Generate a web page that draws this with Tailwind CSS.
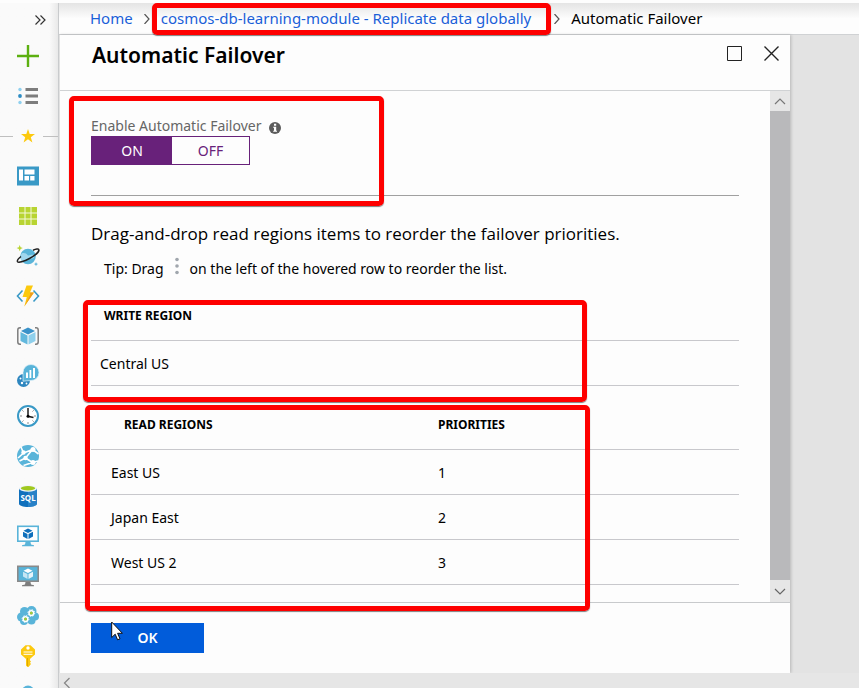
<!DOCTYPE html>
<html lang="en">
<head>
<meta charset="utf-8">
<title>Automatic Failover</title>
<script src="https://cdn.jsdelivr.net/npm/@tailwindcss/browser@4"></script>
</head>
<body class="relative flex h-screen overflow-hidden bg-[#fdfdfd] pt-[3px] font-['Noto_Sans','Open_Sans',sans-serif] text-sm text-black">

<!-- Service sidebar -->
<nav aria-label="Services" class="relative z-10 flex w-[59px] shrink-0 flex-col overflow-hidden border-r border-[#c9cbcd] bg-linear-to-r from-[#fafafa] from-85% to-[#e9e9e9]">
  <button type="button" aria-label="Expand menu" class="flex h-[33px] shrink-0 items-center justify-end pr-3">
    <svg class="h-3 w-3" viewBox="0 0 12 12" fill="none" stroke="#333" stroke-width="1.2"><path d="M1.5 1.5 6 6l-4.500 4.500M6.500 1.500 11 6l-4.500 4.500"/></svg>
  </button>
  <a href="#" aria-label="Create" class="flex h-10 w-14 shrink-0 items-center justify-center">
    <svg class="h-6 w-6" viewBox="0 0 24 24" stroke="#5cb010" stroke-width="2.400"><path d="M12 1v22M1 12h22"/></svg>
  </a>
  <a href="#" aria-label="All services" class="flex h-10 w-14 shrink-0 items-center justify-center">
    <svg class="h-6 w-6" viewBox="0 0 24 24"><path fill="#7d7d7d" d="M9.500 4H22v3H9.500zM9.500 10.500H22v3H9.500zM9.500 17H22v3H9.500z"/><circle cx="4" cy="5.500" r="1.700" fill="#8fd0ef"/><circle cx="4" cy="12" r="1.900" fill="#2d8cc4"/><circle cx="4" cy="18.500" r="1.700" fill="#8fd0ef"/></svg>
  </a>
  <div class="flex h-10 shrink-0 items-center gap-2">
    <span class="h-px w-[13px] bg-[#bfbfbf]"></span>
    <svg class="h-[14px] w-[14px]" viewBox="0 0 14 14" fill="#fcc90e"><path d="M7 0l1.700 5H14L9.800 8.200 11.400 13.500 7 10.300 2.600 13.500 4.200 8.200 0 5h5.300z"/></svg>
    <span class="h-px flex-1 bg-[#bfbfbf]"></span>
  </div>
  <a href="#" aria-label="Dashboard" class="flex h-10 w-14 shrink-0 items-center justify-center">
    <svg class="h-6 w-6" viewBox="0 0 24 24"><path fill="#3999c6" d="M1 2.500h22v19H1z"/><path fill="#fff" d="M3 5.500h4v11H3zM8.500 5.500h10v5h-10zM8.500 12h4.500v4.500H8.500zM14.200 12h4.300v4.500h-4.300z"/></svg>
  </a>
  <a href="#" aria-label="All resources" class="flex h-10 w-14 shrink-0 items-center justify-center">
    <svg class="h-6 w-6" viewBox="0 0 24 24"><path fill="#b8d432" d="M3 3h18v18H3z"/><path stroke="#f5f9dc" stroke-width="1" d="M9 3v18M15 3v18M3 9h18M3 15h18"/></svg>
  </a>
  <a href="#" aria-label="Azure Cosmos DB" class="flex h-10 w-14 shrink-0 items-center justify-center">
    <svg class="h-6 w-6" viewBox="0 0 24 24"><circle cx="12" cy="12.500" r="7.800" fill="#59b4d9"/><path fill="#9fd6ee" d="M5.500 9.500c3-1 5 0 6 1.500s4-1 7 0l-.5 3-12 3.500c-1.600-2.300-1.700-5-.5-8z"/><path fill="none" stroke="#1e1e1e" stroke-width="1.500" d="M17 6.200c3-1.400 5.400-1.700 5.800-.6.700 1.800-3.600 5.800-9.300 8.900S2.300 19.100 1.500 17.600c-.5-1 .9-3 3.500-5.100"/><path fill="#b8d432" d="M3.700 1l.9 2.200 2.200.9-2.200.9-.9 2.200-.9-2.200L.6 4.100l2.200-.9z"/><path fill="#59b4d9" d="M20 18l.6 1.500 1.500.6-1.500.6L20 22.200l-.6-1.500-1.500-.6 1.500-.6z"/></svg>
  </a>
  <a href="#" aria-label="Function App" class="flex h-10 w-14 shrink-0 items-center justify-center">
    <svg class="h-6 w-6" viewBox="0 0 24 24"><path fill="none" stroke="#3999c6" stroke-width="1.600" d="M6.500 6.500 1.500 12l5 5.500M17.500 6.500l5 5.500-5 5.500"/><path fill="#fcc90e" d="M10.500 1.500h6.500L14 8.500h4L8.300 22.500l2.500-9.500H6.500z"/><path fill="#ef9b1d" d="M14 8.500h4L8.300 22.500l6-12z"/></svg>
  </a>
  <a href="#" aria-label="Resource groups" class="flex h-10 w-14 shrink-0 items-center justify-center">
    <svg class="h-6 w-6" viewBox="0 0 24 24"><path fill="none" stroke="#7d7d7d" stroke-width="1.500" d="M5 3.800H4c-1.500 0-2.200.8-2.200 2.200v12c0 1.400.7 2.200 2.200 2.200h1M19 3.800h1c1.500 0 2.200.8 2.200 2.200v12c0 1.400-.7 2.200-2.200 2.200h-1"/><path fill="#3a92c9" d="M12 3.500 19 7l-7 3.500L5 7z"/><path fill="#62b8dd" d="M4.500 8l7 3.500v9l-7-3.500z"/><path fill="#8fd0ec" d="M19.500 8l-7 3.500v9l7-3.500z"/></svg>
  </a>
  <a href="#" aria-label="Analytics" class="flex h-10 w-14 shrink-0 items-center justify-center">
    <svg class="h-6 w-6" viewBox="0 0 24 24"><circle cx="7.500" cy="16.500" r="6.500" fill="#2d86bf"/><g fill="#fff"><circle cx="4.500" cy="14.500" r="1"/><circle cx="6" cy="19" r="1.200"/><circle cx="10.500" cy="19.500" r=".9"/></g><path fill="#59b4d9" stroke="#dff1f9" stroke-width=".7" d="M7 17.200V8.500A8 8 0 1 1 15 16.500z"/><path fill="#fff" d="M10 8.500h2V14h-2zM13.500 6h1.800v8h-1.800zM17 4h2v10h-2z"/></svg>
  </a>
  <a href="#" aria-label="Recent" class="flex h-10 w-14 shrink-0 items-center justify-center">
    <svg class="h-6 w-6" viewBox="0 0 24 24"><circle cx="12" cy="12" r="10" fill="#fff" stroke="#3999c6" stroke-width="2"/><path stroke="#8b8b8b" stroke-width="1" d="M12 18v2M4 12h2M18 12h2M6.300 6.300l1.200 1.200M16.500 16.500l1.200 1.200M6.300 17.700l1.200-1.200M16.500 7.500l1.200-1.200"/><path fill="none" stroke="#1e1e1e" stroke-width="1.500" d="M12 4v8.300l5.500 1.200"/><circle cx="12" cy="12.300" r="1.500"/></svg>
  </a>
  <a href="#" aria-label="App Services" class="flex h-10 w-14 shrink-0 items-center justify-center">
    <svg class="h-6 w-6" viewBox="0 0 24 24"><circle cx="12" cy="12" r="11" fill="#59b4d9"/><path fill="none" stroke="#fff" stroke-width="1.600" d="M5 3 7.500 9 2 14M7.500 9l9-3.500M9.500 14l7 4.500M9.500 14l7-8.500M9.500 14 3.500 17M16.500 18.500l-9 3M16.500 18.500 22 17M16.500 5.500 22.500 10"/><g fill="#fff"><circle cx="7.500" cy="8.500" r="2.200"/><circle cx="9.500" cy="14" r="2.200"/><circle cx="17" cy="5.500" r="2.500"/><circle cx="17" cy="18.500" r="2.500"/></g></svg>
  </a>
  <a href="#" aria-label="SQL databases" class="flex h-10 w-14 shrink-0 items-center justify-center">
    <svg class="h-6 w-6" viewBox="0 0 24 24"><path fill="#1070bc" d="M3 4.500v15.300C3 21.600 7 23 12 23s9-1.400 9-3.200V4.500z"/><path fill="#3f92d1" d="M12 4.500h9v15.300c0 1.800-4 3.200-9 3.200z" opacity=".5"/><ellipse cx="12" cy="4.500" rx="9" ry="3.300" fill="#eef4f8"/><ellipse cx="12" cy="4.300" rx="7.200" ry="2.200" fill="#a0c81e"/><text x="12" y="16.500" text-anchor="middle" font-size="8" font-weight="700" fill="#fff">SQL</text></svg>
  </a>
  <a href="#" aria-label="Virtual machines" class="flex h-10 w-14 shrink-0 items-center justify-center">
    <svg class="h-6 w-6" viewBox="0 0 24 24"><path fill="#59b4d9" d="M1 1.500h22v16.500H1z"/><path fill="#fff" d="M2.600 3.100h18.800v13.300H2.600z"/><path fill="#59b4d9" d="M9.500 18h5l.5 2.500 3 .7v1H6v-1l3-.7z"/><path fill="#1070bc" d="M12 4.500l4.500 2.200L12 9 7.500 6.700z"/><path fill="#1070bc" d="M7 7.700l4.500 2.200v5L7 12.600zM17 7.700l-4.500 2.200v5l4.500-2.300z"/></svg>
  </a>
  <a href="#" aria-label="Virtual machines (classic)" class="flex h-10 w-14 shrink-0 items-center justify-center">
    <svg class="h-6 w-6" viewBox="0 0 24 24"><path fill="#8a8a8a" d="M1 1.500h22v16.500H1z"/><path fill="#59b4d9" d="M2.600 3.100h18.800v13.300H2.600z"/><path fill="#7d7d7d" d="M9.500 18h5l.5 2.500 3 .7v1H6v-1l3-.7z"/><path fill="#fff" d="M12 4.500l4.500 2.200L12 9 7.500 6.700z"/><path fill="#c6e6f4" d="M7 7.700l4.500 2.200v5L7 12.600z"/><path fill="#e6f4fa" d="M17 7.700l-4.500 2.200v5l4.500-2.300z"/></svg>
  </a>
  <a href="#" aria-label="Cloud services" class="flex h-10 w-14 shrink-0 items-center justify-center">
    <svg class="h-6 w-6" viewBox="0 0 24 24"><g fill="#59b4d9"><circle cx="5.500" cy="13" r="4.500"/><circle cx="8.500" cy="7.500" r="4.500"/><circle cx="15.500" cy="7" r="5"/><circle cx="19" cy="12.500" r="4"/><circle cx="15.500" cy="16.500" r="4"/><circle cx="8" cy="17" r="4"/><path d="M6 8h12v9H6z"/></g><g fill="none" stroke="#fff"><circle cx="15.300" cy="9" r="2.300" stroke-width="1.600"/><circle cx="15.300" cy="9" r="3.400" stroke-width="1" stroke-dasharray="1.330"/><circle cx="9.500" cy="15" r="2.300" stroke-width="1.600"/><circle cx="9.500" cy="15" r="3.400" stroke-width="1" stroke-dasharray="1.330"/></g><g fill="#a5c93a"><circle cx="15.300" cy="9" r="1.500"/><circle cx="9.500" cy="15" r="1.500"/></g></svg>
  </a>
  <a href="#" aria-label="Key vaults" class="flex h-10 w-14 shrink-0 items-center justify-center">
    <svg class="h-6 w-6" viewBox="0 0 24 24"><path fill="#fcc90e" d="M9.500 1.200h5L19 5.500v5L15 14l-1 1v1.500l1 1-1 1.200 1 1.300-2.500 3h-1L10 21.500V15l-1-1-4-3.500v-5z"/><circle cx="12" cy="4" r="1.700" fill="#fff"/><path stroke="#fff" stroke-width="1" d="M7.500 8h9M7.500 10.300h9"/><path stroke="#e0a800" stroke-width="1" d="M11.500 14v8"/></svg>
  </a>
  <a href="#" aria-label="Monitor" class="flex h-10 w-14 shrink-0 items-center justify-center">
    <svg class="h-6 w-6" viewBox="0 0 24 24"><circle cx="12" cy="8" r="6.500" fill="#59b4d9"/></svg>
  </a>
</nav>

<div class="flex min-w-0 flex-1 flex-col">
  <!-- Breadcrumb -->
  <nav aria-label="Breadcrumb" class="flex h-8 shrink-0 items-center border-b border-[#d0d2d4] bg-linear-to-b from-[#e4e4e4] to-[#fdfdfd] to-50% pl-[31px] text-[15px] whitespace-nowrap">
    <a href="#" class="text-[#1a5fd8]">Home</a>
    <svg class="mx-[9px] h-[10px] w-[10px]" viewBox="0 0 10 10" fill="none" stroke="#555" stroke-width="1.200"><path d="M2.500 0l4.500 5-4.500 5"/></svg>
    <a href="#" class="pr-3 text-[#1a5fd8]">cosmos-db-learning-module - Replicate data globally</a>
    <svg class="mx-[9px] h-[10px] w-[10px]" viewBox="0 0 10 10" fill="none" stroke="#555" stroke-width="1.200"><path d="M2.500 0l4.500 5-4.500 5"/></svg>
    <span>Automatic Failover</span>
  </nav>

  <div class="flex min-h-0 flex-1 bg-[#e3e3e3]">
    <!-- Blade -->
    <main class="flex min-w-0 flex-1 flex-col border-l border-[#e2e2e2] bg-[#fdfdfd] shadow-[1px_0_3px_rgba(0,0,0,0.2)]">
      <header class="flex h-14 shrink-0 justify-between border-b border-[#d0d2d4] pr-[10px] pl-8">
        <h1 class="pt-[5px] text-[21px] leading-[30px] font-semibold">Automatic Failover</h1>
        <div class="flex items-start gap-5 pt-[10px]">
          <button type="button" aria-label="Maximize"><svg class="h-[17px] w-[17px]" viewBox="0 0 17 17" fill="none" stroke="#222" stroke-width="1"><path d="M1.500 1.500h14v14h-14z"/></svg></button>
          <button type="button" aria-label="Close"><svg class="h-[17px] w-[17px]" viewBox="0 0 17 17" fill="none" stroke="#222" stroke-width="1.400"><path d="M1.500 1.500l14 14M15.500 1.500l-14 14"/></svg></button>
        </div>
      </header>

      <div class="flex min-h-0 flex-1">
        <div class="min-w-0 flex-1 overflow-hidden pr-[31px] pl-[31px]">
          <div role="radiogroup" aria-labelledby="failover-label" class="border-b border-[#a0a0a0] pt-[25px] pb-[30px]">
            <div class="flex h-5 items-center gap-2 text-[#666]">
              <span id="failover-label">Enable Automatic Failover</span>
              <svg class="mt-[3px] h-3 w-3" viewBox="0 0 12 12"><circle cx="6" cy="6" r="6" fill="#5c5c5c"/><path fill="#fff" d="M5 1.800h2.200v1.900H5zM4.200 4.700h3v4h.8v1H4.200v-1H5v-3h-.8z"/></svg>
            </div>
            <div class="flex h-[29px] w-[159px] border border-[#68217a] leading-7">
              <label class="w-20 bg-[#68217a] text-center text-white"><input type="radio" name="failover" class="sr-only" checked>ON</label>
              <label class="flex-1 text-center text-[#68217a]"><input type="radio" name="failover" class="sr-only">OFF</label>
            </div>
          </div>

          <p class="pt-[26px] font-['Open_Sans','Noto_Sans',sans-serif] text-[17px] leading-6">Drag-and-drop read regions items to reorder the failover priorities.</p>
          <p class="mt-[13px] flex h-5 items-center pl-[13px] whitespace-nowrap">Tip: Drag
            <svg class="mr-[11px] mb-[6px] ml-[11px] h-[18px] w-1" viewBox="0 0 4 18" fill="#a0a6ad"><circle cx="2" cy="2.500" r="1.800"/><circle cx="2" cy="9" r="1.800"/><circle cx="2" cy="15.500" r="1.800"/></svg>
            on the left of the hovered row to reorder the list.</p>

          <table class="mt-[11px] w-full table-fixed text-left">
            <thead><tr class="h-[50px] border-b border-[#c8c8cc]"><th class="pt-[2px] pl-[13px] text-xs font-bold">WRITE REGION</th></tr></thead>
            <tbody><tr class="h-[45px] border-b border-[#c8c8cc]"><td class="pt-[2px] pl-[9px]">Central US</td></tr></tbody>
          </table>

          <table class="mt-[13px] w-full table-fixed text-left">
            <thead><tr class="h-[51px] border-b border-[#c8c8cc] text-xs"><th class="w-[347px] pt-[2px] pl-[33px] font-bold">READ REGIONS</th><th class="pt-[2px] font-bold">PRIORITIES</th></tr></thead>
            <tbody>
              <tr class="h-[45px] border-b border-[#c8c8cc]"><td class="pt-[2px] pl-5">East US</td><td class="pt-[2px]">1</td></tr>
              <tr class="h-[45px] border-b border-[#c8c8cc]"><td class="pt-[2px] pl-5">Japan East</td><td class="pt-[2px]">2</td></tr>
              <tr class="h-[45px] border-b border-[#c8c8cc]"><td class="pt-[2px] pl-5">West US 2</td><td class="pt-[2px]">3</td></tr>
            </tbody>
          </table>
        </div>

        <!-- Vertical scroll bar -->
        <div class="flex w-5 shrink-0 flex-col bg-[#e6e6e6]">
          <button type="button" aria-label="Scroll up" class="flex h-5 items-center justify-center"><svg class="h-3 w-3" viewBox="0 0 12 12" fill="none" stroke="#777" stroke-width="1.200"><path d="M1 9l5-5 5 5"/></svg></button>
          <div class="flex-1 bg-[#b9b9bb]"></div>
          <button type="button" aria-label="Scroll down" class="flex h-[22px] items-center justify-center"><svg class="h-3 w-3" viewBox="0 0 12 12" fill="none" stroke="#666" stroke-width="1.200"><path d="M1 4l5 5 5-5"/></svg></button>
        </div>
      </div>

      <footer class="relative h-[71px] shrink-0 border-t border-[#c8cacc] pt-5 pl-[31px]">
        <button type="button" class="h-[30px] w-[113px] bg-[#015cda] font-semibold text-white">OK</button>
        <svg class="absolute top-[18px] left-[51px] h-5 w-3" viewBox="0 0 12 20"><path fill="#fff" stroke="#111" stroke-width="1" d="M.7 1v15.500l3.500-3.300 2.400 5.600 2.400-1-2.400-5.500h4.800z"/></svg>
      </footer>
    </main>
    <div class="w-[69px] shrink-0"></div>
  </div>

  <!-- Horizontal scroll bar -->
  <div class="flex h-[15px] shrink-0 items-end bg-[#e6e6e6] pl-1">
    <button type="button" aria-label="Scroll left"><svg class="h-[11px] w-2" viewBox="0 0 8 11" fill="none" stroke="#888" stroke-width="1.300"><path d="M6.500 1 1.500 6l5 5"/></svg></button>
  </div>
</div>

<!-- Highlight frames -->
<div class="pointer-events-none absolute top-[3px] left-[152px] z-20 h-8 w-[399px] rounded-[5px] border-5 border-[#fe0000] shadow-[0_1px_1px_rgba(0,0,0,0.5)]"></div>
<div class="pointer-events-none absolute top-24 left-[69px] z-20 h-[110px] w-[315px] rounded-[5px] border-5 border-[#fe0000] shadow-[0_1px_1px_rgba(0,0,0,0.5)]"></div>
<div class="pointer-events-none absolute top-[300px] left-[83px] z-20 h-[102px] w-[504px] rounded-[5px] border-5 border-[#fe0000] shadow-[0_1px_1px_rgba(0,0,0,0.5)]"></div>
<div class="pointer-events-none absolute top-[405px] left-[85px] z-20 h-[206px] w-[505px] rounded-[5px] border-5 border-[#fe0000] shadow-[0_1px_1px_rgba(0,0,0,0.5)]"></div>
</body>
</html>
